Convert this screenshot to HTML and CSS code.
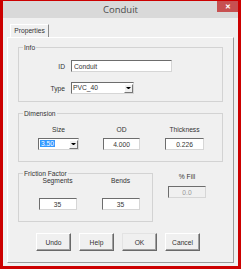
FILE: index.html
```html
<!DOCTYPE html>
<html lang="en">
<head>
  <meta charset="UTF-8">
  <title>Conduit</title>
  <link rel="stylesheet" href="styles.css">
</head>
<body>

  <div class="window">
    <div class="titlebar">
      <span class="title">Conduit</span>
      <span class="close">&#x2715;</span>
    </div>

    <div class="client">
      <div class="tabs">
        <div class="tab">Properties</div>
      </div>

      <div class="page">

        <div class="group info">
          <span class="legend">Info</span>
          <label class="row-label">ID</label>
          <input class="edit left" type="text" value="Conduit">
          <label class="row-label">Type</label>
          <div class="combo type-combo">
            <span class="combo-text">PVC_40</span>
            <span class="drop"><i></i></span>
          </div>
        </div>

        <div class="group dimension">
          <span class="legend">Dimension</span>
          <div class="cell">
            <span class="cap">Size</span>
            <div class="combo size-combo">
              <span class="combo-text"><span class="sel">3.50</span></span>
              <span class="drop"><i></i></span>
            </div>
          </div>
          <div class="cell">
            <span class="cap">OD</span>
            <input class="edit od" type="text" value="4.000">
          </div>
          <div class="cell">
            <span class="cap">Thickness</span>
            <input class="edit thick" type="text" value="0.226">
          </div>
        </div>

        <div class="lower">
          <div class="group friction">
            <span class="legend">Friction Factor</span>
            <div class="cell">
              <span class="cap">Segments</span>
              <input class="edit num" type="text" value="35">
            </div>
            <div class="cell">
              <span class="cap">Bends</span>
              <input class="edit num" type="text" value="35">
            </div>
          </div>
          <div class="fill">
            <span class="cap">% Fill</span>
            <input class="edit num" type="text" value="0.0" disabled>
          </div>
        </div>

        <div class="buttons">
          <button>Undo</button>
          <button>Help</button>
          <button class="default">OK</button>
          <button>Cancel</button>
        </div>

      </div>
    </div>
  </div>

</body>
</html>
```

FILE: styles.css
```css
body {
  margin: 0;
  background: white;
  font-family: "Liberation Sans", Arial, sans-serif;
}

.window {
  width: 241px;
  height: 269px;
  box-sizing: border-box;
  border: 3px solid #cc0000;
  border-top-width: 1px;
  display: flex;
  flex-direction: column;
}

.titlebar {
  height: 17px;
  background: #d9d9d9;
  display: grid;
  grid-template-columns: 1fr auto 1fr;
}

.title {
  grid-column: 2;
  font-family: "Open Sans", "Liberation Sans", sans-serif;
  font-size: 9.5px;
  line-height: 17px;
  color: #4a4a4a;
}

.close {
  grid-column: 3;
  justify-self: end;
  width: 21px;
  height: 11px;
  background: #c75050;
  color: white;
  font-size: 7px;
  font-weight: bold;
  line-height: 11px;
  text-align: center;
}

.client {
  flex: 1;
  background: #f0f0f0;
  padding: 6px 0 0 4px;
  font-size: 6.7px;
  color: #333;
}

.tabs {
  display: flex;
  padding-left: 3px;
}

.tab {
  width: 39px;
  height: 13px;
  box-sizing: border-box;
  border-top: 1px solid #fff;
  border-left: 1px solid #fff;
  border-right: 1px solid #8a8a8a;
  line-height: 12px;
  text-align: center;
}

.page {
  width: 227px;
  height: 226px;
  box-sizing: border-box;
  border-top: 1px solid #fff;
  border-left: 1px solid #fff;
  border-right: 1px solid #9a9a9a;
  border-bottom: 1px solid #9a9a9a;
  padding: 9px 10px 0 10px;
}

.group {
  position: relative;
  box-sizing: border-box;
  border: 1px solid #d3d3d3;
}

.legend {
  position: absolute;
  top: -5px;
  left: 4px;
  padding: 0 1px;
  line-height: 9px;
  background: #f0f0f0;
}

.info {
  height: 55px;
  display: grid;
  grid-template-columns: 46px 101px;
  column-gap: 6px;
  row-gap: 10px;
  align-items: center;
  align-content: start;
  padding-top: 12px;
}

.row-label {
  text-align: right;
}

.edit {
  box-sizing: border-box;
  height: 12px;
  margin: 0;
  padding: 0 2px;
  border: 1px solid #d6d6d6;
  border-top-color: #6d6d6d;
  border-left-color: #6d6d6d;
  background: white;
  font-family: inherit;
  font-size: 6.7px;
  color: #333;
  text-align: center;
  outline: none;
}

.edit.left {
  text-align: left;
  width: 101px;
}

.edit:disabled {
  background: #f0f0f0;
  color: #999;
}

.combo {
  box-sizing: border-box;
  height: 12px;
  border: 1px solid #d6d6d6;
  border-top-color: #6d6d6d;
  border-left-color: #6d6d6d;
  background: white;
  display: flex;
  align-items: center;
}

.type-combo {
  width: 63px;
}

.size-combo {
  width: 41px;
}

.combo-text {
  flex: 1;
  padding-left: 1px;
  line-height: 10px;
}

.sel {
  background: #3399ff;
  color: white;
  padding: 0 1px;
}

.drop {
  width: 9px;
  height: 9px;
  box-sizing: border-box;
  background: #f0f0f0;
  border: 1px solid #fff;
  border-right-color: #777;
  border-bottom-color: #777;
  display: flex;
  align-items: center;
  justify-content: center;
}

.drop i {
  width: 1px;
  height: 0;
  border-top: 2px solid #000;
  border-left: 2px solid transparent;
  border-right: 2px solid transparent;
}

.dimension {
  margin-top: 11px;
  height: 49px;
  display: grid;
  grid-template-columns: 63px 63px 63px;
  padding: 11px 0 0 8px;
}

.cell {
  display: flex;
  flex-direction: column;
  align-items: center;
  gap: 4px;
}

.cap {
  line-height: 9px;
}

.od {
  width: 37px;
}

.thick {
  width: 39px;
}

.lower {
  margin-top: 11px;
  display: flex;
  align-items: flex-start;
}

.friction {
  width: 135px;
  height: 49px;
  display: grid;
  grid-template-columns: 63px 63px;
  padding: 2px 0 0 7px;
}

.friction .cell {
  gap: 13px;
}

.num {
  width: 38px;
}

.fill {
  width: 68px;
  margin-top: -1px;
  display: flex;
  flex-direction: column;
  align-items: center;
  gap: 5px;
}

.buttons {
  margin-top: 11px;
  padding-left: 18px;
  display: flex;
  gap: 8px;
}

button {
  width: 35px;
  height: 18px;
  margin: 0;
  padding: 0;
  background: #f0f0f0;
  border: 1px solid #fff;
  border-right-color: #696969;
  border-bottom-color: #696969;
  box-shadow: inset -1px -1px 0 #a0a0a0;
  font-family: inherit;
  font-size: 6.7px;
  color: #333;
}

button.default {
  border-top-color: #e3e3e3;
  border-left-color: #e3e3e3;
}
```
